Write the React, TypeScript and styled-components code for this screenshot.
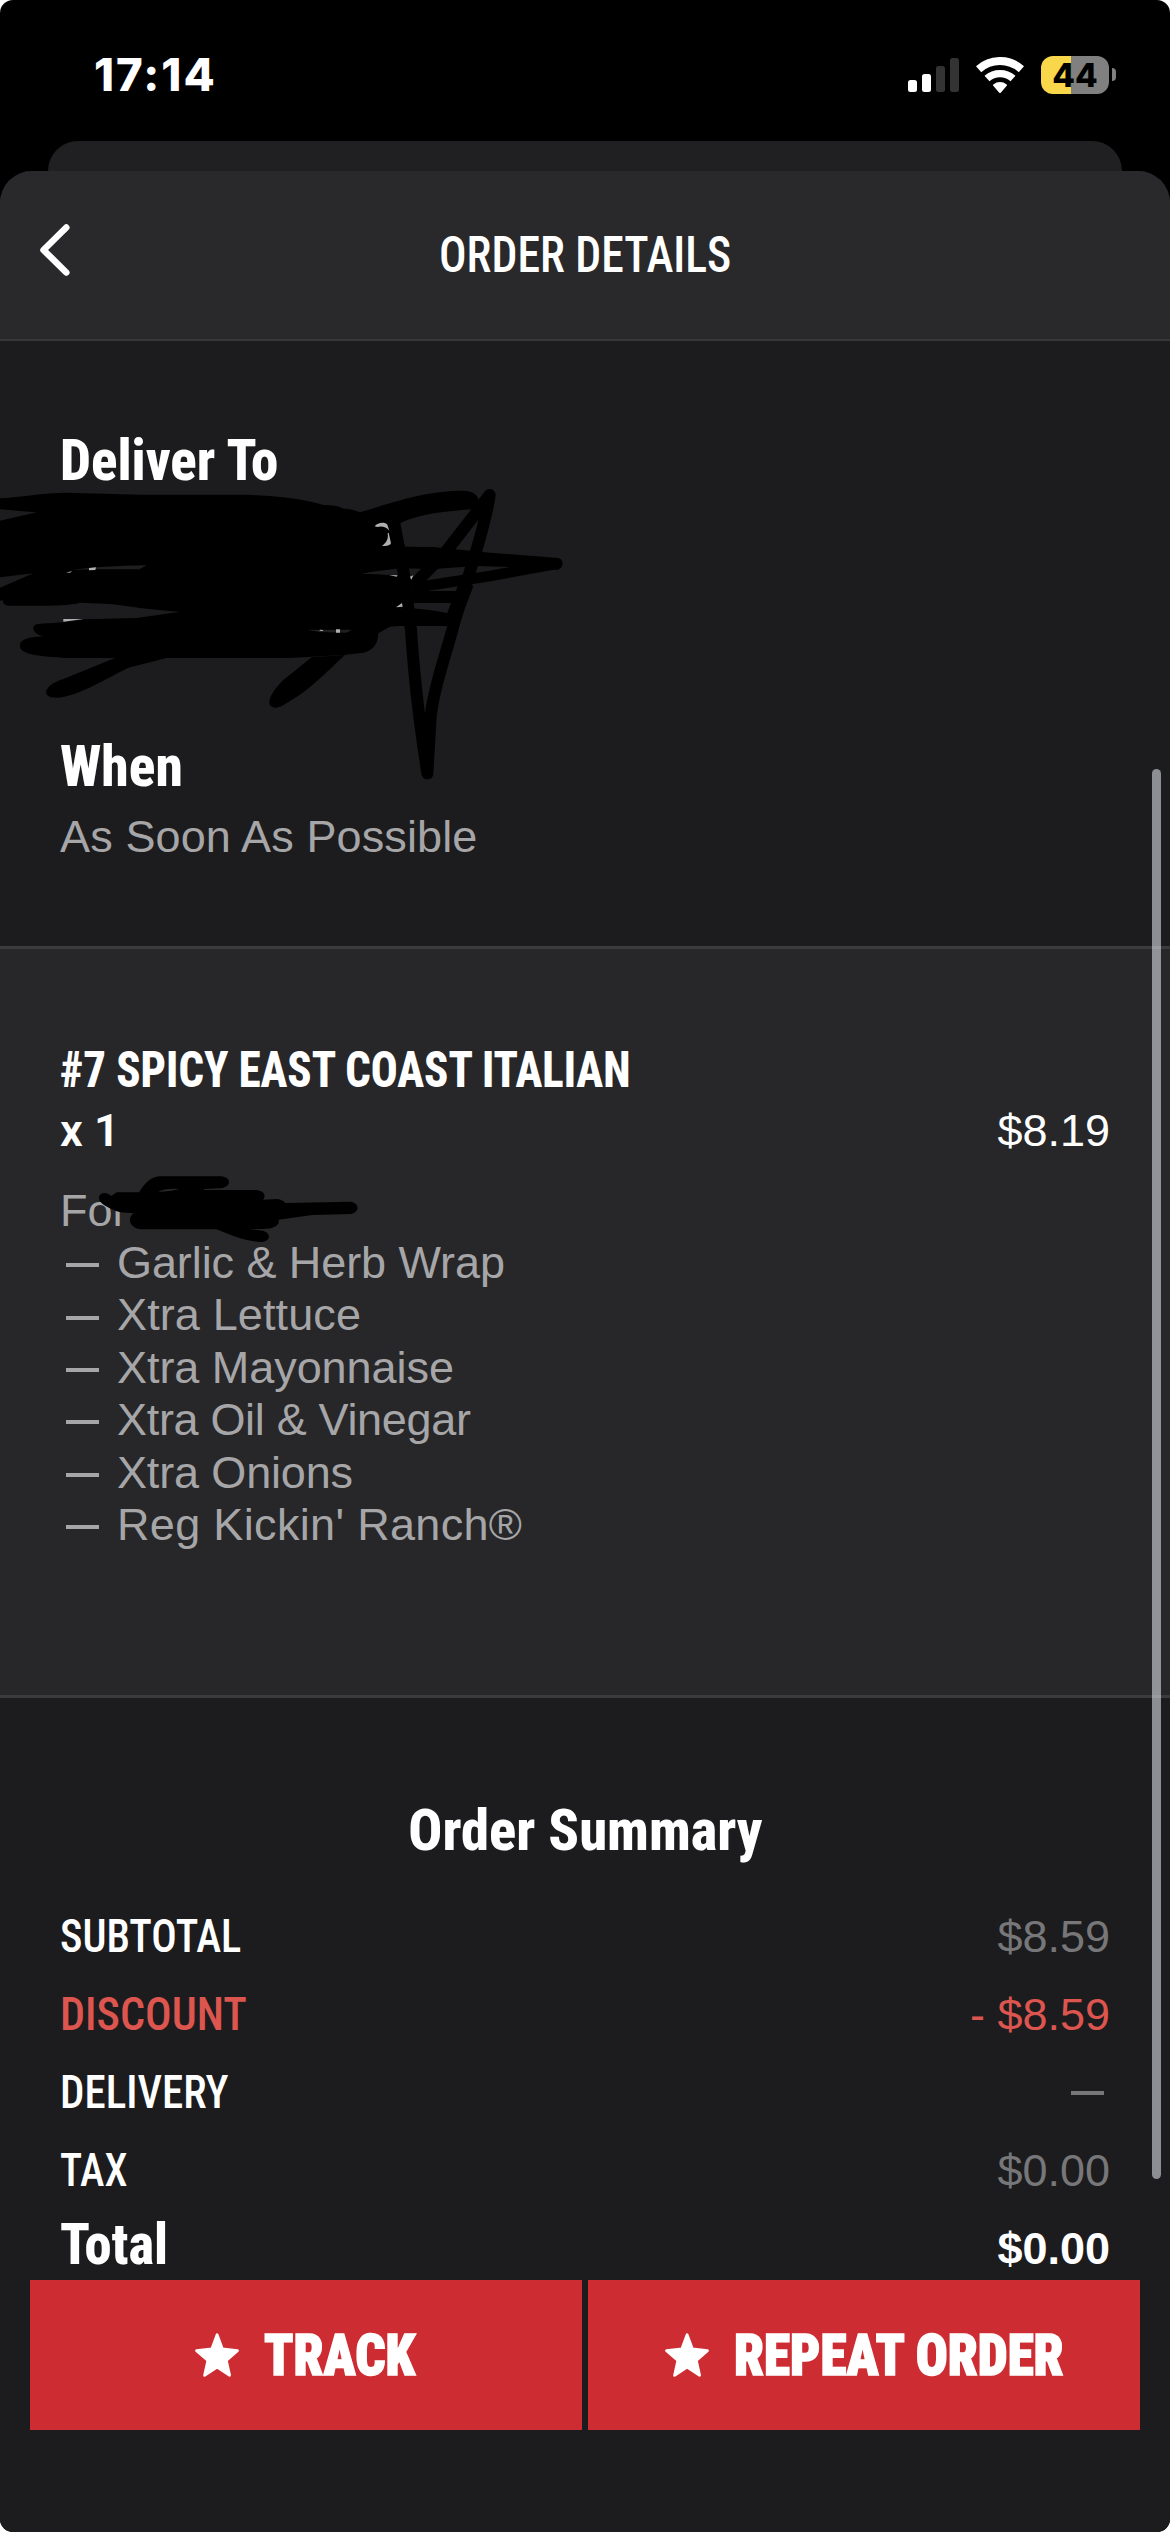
import React from "react";
import styled, { createGlobalStyle } from "styled-components";

const condensed = `"Roboto Condensed", Roboto, "Liberation Sans", sans-serif`;
const sans = `"Liberation Sans", Arial, sans-serif`;

const GlobalStyle = createGlobalStyle`
  *, *::before, *::after { box-sizing: border-box; }
  html, body { margin: 0; padding: 0; background: #fff; }
  h1, h2, h3, p, ul, dl, dt, dd { margin: 0; padding: 0; font: inherit; }
`;

const Screen = styled.div`
  position: relative;
  display: flex;
  flex-direction: column;
  width: 1170px;
  height: 2532px;
  overflow: hidden;
  border-radius: 13px;
  background: #000;
  color: #fff;
  font-family: ${sans};
`;

/* status bar */
const StatusBar = styled.header`
  display: flex;
  align-items: center;
  flex: none;
  height: 141px;
  padding: 8px 54px 0 94px;
`;
const Clock = styled.time`
  margin-right: auto;
  font: 800 45.5px/50px Inter, sans-serif;
  letter-spacing: 2px;
`;
const Signal = styled.svg`
  width: 51px;
  height: 34px;
  margin-right: 17px;
`;
const Wifi = styled.svg`
  width: 48px;
  height: 36px;
  margin-right: 17px;
`;
const Battery = styled.div`
  display: flex;
  align-items: center;
  justify-content: center;
  width: 68px;
  height: 38px;
  border-radius: 12px;
  background: linear-gradient(90deg, #f8d74a 30px, #808080 30px);
  color: #000;
  font: 800 33px/38px Inter, sans-serif;
`;
const BatteryCap = styled.span`
  width: 4px;
  height: 13px;
  margin-left: 3px;
  border-radius: 0 5px 5px 0;
  background: #808080;
`;

/* sheets */
const BackSheet = styled.div`
  flex: none;
  height: 30px;
  margin: 0 48px;
  border-radius: 30px 30px 0 0;
  background: #202022;
`;
const Sheet = styled.main`
  display: flex;
  flex-direction: column;
  flex: 1;
  border-radius: 32px 32px 0 0;
  background: #1c1c1e;
  overflow: hidden;
`;
const NavBar = styled.div`
  display: grid;
  grid-template-columns: 120px 1fr 120px;
  align-items: center;
  flex: none;
  height: 170px;
  padding-top: 2px;
  border-bottom: 2px solid #37373a;
  background: #29292b;
`;
const BackButton = styled.button`
  display: flex;
  width: 60px;
  height: 60px;
  margin: -12px 0 0 28px;
  padding: 0;
  border: 0;
  background: none;
`;

type TypeProps = { $size: number; $weight?: number; $fit?: number; $from?: string; $stroke?: number };
const Condensed = styled.span<TypeProps>`
  display: inline-block;
  font-family: ${condensed};
  font-size: ${(p) => p.$size}px;
  font-weight: ${(p) => p.$weight ?? 700};
  white-space: nowrap;
  transform: scaleX(${(p) => p.$fit ?? 1});
  transform-origin: ${(p) => p.$from ?? "left"} center;
  -webkit-text-stroke: ${(p) => p.$stroke ?? 0}px currentColor;
`;
const NavTitle = styled.h1`
  padding-top: 10px;
  text-align: center;
  line-height: 60px;
`;

const Section = styled.section<{ $raised?: boolean; $height?: number; $top: number }>`
  flex: none;
  height: ${(p) => (p.$height ? `${p.$height}px` : "auto")};
  padding: ${(p) => p.$top}px 60px 0;
  background: ${(p) => (p.$raised ? "#272729" : "#1c1c1e")};
`;
const Rule = styled.hr`
  flex: none;
  width: 100%;
  height: 3px;
  margin: 0;
  border: 0;
  background: #3b3b3d;
`;
const Heading = styled.h2<{ $center?: boolean }>`
  height: 64px;
  line-height: 64px;
  text-align: ${(p) => (p.$center ? "center" : "left")};
`;
const Address = styled.div`
  height: 242px;
`;
const Muted = styled.p`
  margin-top: 12px;
  color: #a6a6a8;
  font-size: 45px;
  line-height: 52px;
  letter-spacing: 0.12px;
`;

const ItemName = styled.h3`
  height: 60px;
  line-height: 60px;
`;
const QtyRow = styled.div`
  display: flex;
  justify-content: space-between;
  height: 60px;
  font-size: 45px;
  line-height: 61px;
`;
const Qty = styled.span`
  font: 600 45px/61px Roboto, sans-serif;
`;
const Details = styled.ul`
  margin-top: 24.5px;
  list-style: none;
  color: #a6a6a8;
  font-size: 45px;
  line-height: 52.4px;
`;
const Detail = styled.li<{ $track?: number }>`
  display: flex;
  align-items: center;
  letter-spacing: ${(p) => p.$track ?? 0}px;
`;
const Dash = styled.i<{ $muted?: boolean }>`
  width: 33px;
  height: 4px;
  margin: ${(p) => (p.$muted ? "2px 6px 0 0" : "4px 18px 0 6px")};
  background: ${(p) => (p.$muted ? "#77777a" : "#a6a6a8")};
`;

const Totals = styled.dl`
  margin-top: 34px;
`;
const TotalRow = styled.div<{ $tone?: "discount" | "final" }>`
  display: flex;
  align-items: center;
  justify-content: space-between;
  height: ${(p) => (p.$tone === "final" ? 71 : 78)}px;
  color: ${(p) => (p.$tone === "discount" ? "#dc554f" : "#fff")};
`;
const Amount = styled.dd<{ $tone?: "discount" | "final" }>`
  padding-top: ${(p) => (p.$tone === "final" ? 8 : 1)}px;
  color: ${(p) => (p.$tone ? "inherit" : "#77777a")};
  font-size: 45px;
  font-weight: ${(p) => (p.$tone === "final" ? 700 : 400)};
  line-height: 52px;
`;

const Actions = styled.nav`
  display: grid;
  grid-template-columns: 1fr 1fr;
  gap: 6px;
  flex: none;
  padding: 0 30px;
`;
const Action = styled.button`
  display: flex;
  align-items: center;
  justify-content: center;
  gap: 24px;
  height: 150px;
  padding: 0;
  border: 0;
  background: #ce2c33;
  color: #fff;
`;
const ActionLabel = styled.span<{ $width: number }>`
  display: flex;
  width: ${(p) => p.$width}px;
  padding-top: 1px;
  line-height: 64px;
`;

const ScrollThumb = styled.div`
  position: absolute;
  top: 769px;
  left: 1152px;
  width: 9px;
  height: 1410px;
  border-radius: 5px;
  background: rgba(235, 235, 245, 0.55);
`;
const Scribble = styled.svg<{ $x: number; $y: number; $w: number; $h: number }>`
  position: absolute;
  left: ${(p) => p.$x}px;
  top: ${(p) => p.$y}px;
  width: ${(p) => p.$w}px;
  height: ${(p) => p.$h}px;
`;

const Star = () => (
  <svg width="46" height="46" viewBox="-1 -1 46 46">
    <path
      d="M22.1 1.8 27.3 15.8 42.5 17.6 31.3 27.4 34.6 42.4 22.1 34.2 9.6 42.4 12.9 27.4 1.5 17.6 16.9 15.8Z"
      fill="#fff"
      stroke="#fff"
      strokeWidth="2.8"
      strokeLinejoin="round"
    />
  </svg>
);

const extras: { name: string; track?: number }[] = [
  { name: "Garlic & Herb Wrap", track: -0.08 },
  { name: "Xtra Lettuce", track: 0.12 },
  { name: "Xtra Mayonnaise", track: -0.05 },
  { name: "Xtra Oil & Vinegar", track: -0.32 },
  { name: "Xtra Onions", track: -0.15 },
  { name: "Reg Kickin' Ranch®", track: 0.33 },
];

const totals: { label: string; fit: number; amount?: string; tone?: "discount" }[] = [
  { label: "SUBTOTAL", fit: 0.913, amount: "$8.59" },
  { label: "DISCOUNT", fit: 0.952, amount: "- $8.59", tone: "discount" },
  { label: "DELIVERY", fit: 0.928 },
  { label: "TAX", fit: 0.895, amount: "$0.00" },
];

export default function App() {
  return (
    <Screen>
      <GlobalStyle />
      <StatusBar>
        <Clock>17:14</Clock>
        <Signal viewBox="0 0 51 34">
          <rect x="0" y="22" width="9" height="12" rx="2.5" fill="#fff" />
          <rect x="14" y="16" width="9" height="18" rx="2.5" fill="#fff" />
          <rect x="28" y="8" width="9" height="26" rx="2.5" fill="#333" />
          <rect x="42" y="0" width="9" height="34" rx="2.5" fill="#333" />
        </Signal>
        <Wifi viewBox="0 0 48 36" fill="none" stroke="#fff">
          <path d="M2.6 12.2A32 32 0 0 1 45.4 12.2" strokeWidth="8" />
          <path d="M11 21.6A19.4 19.4 0 0 1 37 21.6" strokeWidth="7.4" />
          <path d="M24 35 18 28.2A9.5 9.5 0 0 1 30 28.2Z" fill="#fff" strokeWidth="2" strokeLinejoin="round" />
        </Wifi>
        <Battery>44</Battery>
        <BatteryCap />
      </StatusBar>
      <BackSheet />
      <Sheet>
        <NavBar>
          <BackButton aria-label="Back">
            <svg width="60" height="60" viewBox="0 0 60 60">
              <path d="M38.3 7.5 15.5 30 38.3 52.5" fill="none" stroke="#fff" strokeWidth="6.5" strokeLinecap="round" strokeLinejoin="round" />
            </svg>
          </BackButton>
          <NavTitle>
            <Condensed $size={49.2} $weight={500} $fit={0.93} $from="center">ORDER DETAILS</Condensed>
          </NavTitle>
        </NavBar>

        <Section $top={88} $height={605}>
          <Heading>
            <Condensed $size={57.6} $weight={800} $fit={0.955}>Deliver To</Condensed>
          </Heading>
          <Address />
          <Heading>
            <Condensed $size={57.6} $weight={800} $fit={0.962}>When</Condensed>
          </Heading>
          <Muted>As Soon As Possible</Muted>
        </Section>
        <Rule />

        <Section $raised $top={91} $height={746}>
          <ItemName>
            <Condensed $size={49.2} $weight={800} $fit={0.908}>#7 SPICY EAST COAST ITALIAN</Condensed>
          </ItemName>
          <QtyRow>
            <Qty>x 1</Qty>
            <span>$8.19</span>
          </QtyRow>
          <Details>
            <Detail>For</Detail>
            {extras.map(({ name, track }) => (
              <Detail key={name} $track={track}><Dash />{name}</Detail>
            ))}
          </Details>
        </Section>
        <Rule />

        <Section $top={101} $height={582}>
          <Heading $center>
            <Condensed $size={57.6} $weight={800} $fit={0.982} $from="center">Order Summary</Condensed>
          </Heading>
          <Totals>
            {totals.map((row) => (
              <TotalRow key={row.label} $tone={row.tone}>
                <dt><Condensed $size={46.4} $weight={500} $fit={row.fit}>{row.label}</Condensed></dt>
                {row.amount ? <Amount $tone={row.tone}>{row.amount}</Amount> : <Dash as="dd" $muted />}
              </TotalRow>
            ))}
            <TotalRow $tone="final">
              <dt><Condensed $size={57.6} $weight={800} $fit={0.948}>Total</Condensed></dt>
              <Amount $tone="final">$0.00</Amount>
            </TotalRow>
          </Totals>
        </Section>

        <Actions>
          <Action>
            <Star />
            <ActionLabel $width={155}>
              <Condensed $size={56.5} $weight={900} $fit={0.94} $stroke={1.5}>TRACK</Condensed>
            </ActionLabel>
          </Action>
          <Action>
            <Star />
            <ActionLabel $width={331}>
              <Condensed $size={56.5} $weight={900} $fit={0.94} $stroke={1.5}>REPEAT ORDER</Condensed>
            </ActionLabel>
          </Action>
        </Actions>
      </Sheet>

      <Scribble $x={0} $y={480} $w={600} $h={310} viewBox="0 0 1800 930">
        <path d="M0 55C60 52 130 38 200 38L420 44H740C860 50 920 60 970 75 1010 76 1020 80 1030 86 1050 86 1070 92 1080 97L1160 110 1190 130 1215 200 1110 276 1085 281 1200 285 1230 310 1240 370 1200 385V438L1170 440 1135 460C1134 500 1110 515 1090 518L1030 525 870 534H200C120 528 60 525 60 497 62 472 100 472 130 469 90 460 95 432 115 432 150 428 200 430 250 418L410 414 540 395C450 390 380 378 330 372L240 368C200 380 100 377 25 377 10 375 8 365 8 360L0 362V323L100 280 0 292V122L110 97C70 95 30 90 0 88Z" />
        <path d="M1080 97C1170 70 1270 32 1390 32 1440 32 1452 75 1415 88 1340 95 1260 100 1200 130L1160 150 1060 150Z" />
        <path d="M1100 202 1215 200 1300 201 1470 218 1675 234C1692 238 1692 262 1675 269L1570 262 1430 258 1300 267 1200 265 1080 280Z" />
        <path d="M1160 385H1240C1290 390 1330 395 1360 405L1340 438H1160Z" />
        <g fill="none" stroke="#000" strokeWidth="36" strokeLinecap="round" strokeLinejoin="round">
          <path d="M1180 115 1213 290 1233 450C1246 640 1264 760 1282 880L1292 710C1300 620 1340 520 1362 430L1428 215C1450 140 1464 80 1469 45L1400 135 1330 225 1250 305" />
          <path d="M1670 251 1470 288 1250 322" strokeWidth="32" />
          <path d="M1180 351H1370" />
          <path d="M1350 438 1400 310" strokeWidth="44" strokeLinecap="butt" />
        </g>
        <path d="M345 534 190 597C125 618 125 655 170 653 230 650 300 605 385 563L500 534Z" />
        <path d="M935 532 850 600C810 640 803 665 812 678 830 692 850 675 870 663 930 630 980 575 1035 525Z" />
        <path d="M215 270C280 262 350 257 440 256L418 268H280Z M920 449H1055L1040 458 960 456Z M1130 281 1195 285 1192 289Z" fill="#1f1f21" />
        <g fill="#b0b0b2">
          <path d="M267 264 288 262 286 270 267 271Z M198 278 216 273 210 278Z M190 417H250L190 425Z M1008 448H1020V458H1008Z M960 449 970 450 968 453 958 452Z M1168 285 1192 286 1190 290Z M1230 290 1240 286 1234 299Z M1188 382 1206 369 1208 380Z" />
          <path d="M1124 139C1132 127 1155 124 1162 134L1168 152C1158 140 1145 137 1132 141Z M1166 158 1173 190C1170 198 1155 199 1146 197 1158 190 1166 178 1163 160Z" />
        </g>
      </Scribble>
      <Scribble $x={89.3} $y={1173.3} $w={276.8} $h={73.3} viewBox="200 730 620 220" preserveAspectRatio="none">
        <path d="M250 799 262 788H312C325 760 340 740 360 740H495C520 742 520 772 495 776L460 778 455 781H575C595 785 596 800 590 810L620 808C635 810 638 818 640 820L785 816C808 820 806 850 785 853L700 856 625 870C628 890 610 898 590 898H560L590 903C610 912 606 936 585 937 550 935 520 918 485 899H315C290 895 285 865 300 851L270 848C240 835 215 815 224 797 230 787 240 788 250 799Z" />
        <path d="M355 787C370 776 390 777 402 778L385 783Z" fill="#272729" />
      </Scribble>
      <ScrollThumb />
    </Screen>
  );
}
